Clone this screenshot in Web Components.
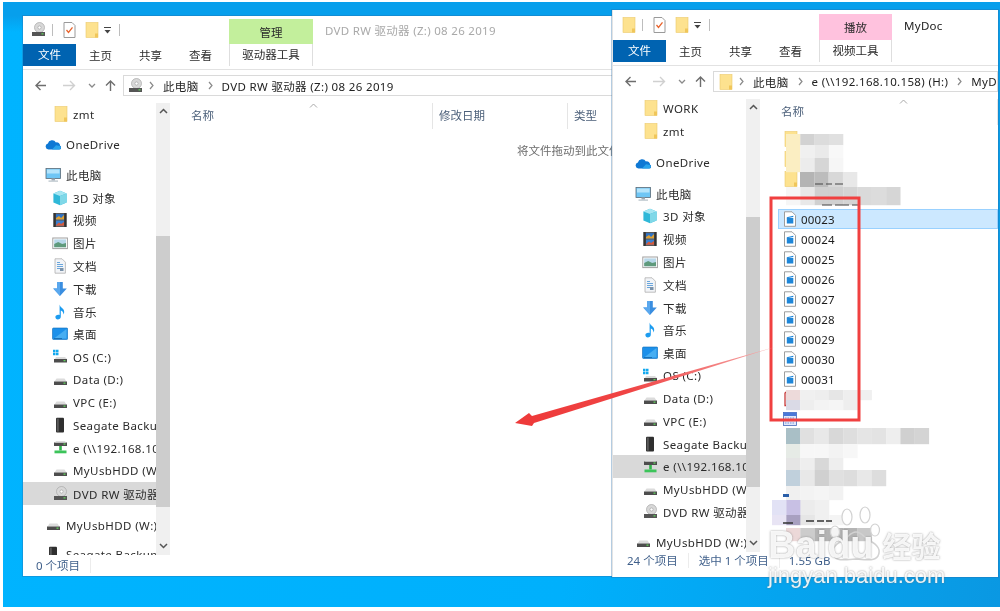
<!DOCTYPE html>
<html lang="zh">
<head>
<meta charset="utf-8">
<title>explorer</title>
<style>
html, body { margin: 0; padding: 0; background: #fff; }
body { font-family: "Noto Sans", "Noto Sans CJK SC", sans-serif; font-size: 11.5px; color: #2b2b2b; }
</style>
</head>
<body>
<x-desktop>
  <x-window style="left:23px;top:16px;width:640px;height:560px;--title-h:28px;--title-color:#a9a9a9;--ctx-bg:#c3ef9c;--ctx-w:84px;--ctx-h:25px;--status-h:21px;--status-top:3px;--status-left:13px">
    <x-icon slot="qat" name="dvd"></x-icon>
    <span slot="title">DVD RW 驱动器 (Z:) 08 26 2019</span>
    <span slot="ctx">管理</span>
    <span slot="tool">驱动器工具</span>
    <x-address slot="address" icon="dvd">
      <x-crumb>此电脑</x-crumb>
      <x-crumb>DVD RW 驱动器 (Z:) 08 26 2019</x-crumb>
    </x-address>
    <x-nav slot="nav" thumb-top="133" thumb-h="271">
      <x-nav-item icon="folder">zmt</x-nav-item>
      <x-nav-item icon="onedrive" level="0" gap="7">OneDrive</x-nav-item>
      <x-nav-item icon="pc" level="0" gap="8">此电脑</x-nav-item>
      <x-nav-item icon="cube">3D 对象</x-nav-item>
      <x-nav-item icon="video">视频</x-nav-item>
      <x-nav-item icon="picture">图片</x-nav-item>
      <x-nav-item icon="docs">文档</x-nav-item>
      <x-nav-item icon="download">下载</x-nav-item>
      <x-nav-item icon="music">音乐</x-nav-item>
      <x-nav-item icon="desktop">桌面</x-nav-item>
      <x-nav-item icon="os">OS (C:)</x-nav-item>
      <x-nav-item icon="drive">Data (D:)</x-nav-item>
      <x-nav-item icon="drive">VPC (E:)</x-nav-item>
      <x-nav-item icon="seagate">Seagate Backup Plus</x-nav-item>
      <x-nav-item icon="net">e (\\192.168.10.158) (H:)</x-nav-item>
      <x-nav-item icon="drive">MyUsbHDD (W:)</x-nav-item>
      <x-nav-item icon="dvd" selected>DVD RW 驱动器 (Z:)</x-nav-item>
      <x-nav-item icon="drive" level="0" gap="9">MyUsbHDD (W:)</x-nav-item>
      <x-nav-item icon="seagate" level="0" gap="6">Seagate Backup</x-nav-item>
    </x-nav>
    <x-columns slot="content" caret="137">
      <span style="width:261px;padding-left:19px">名称</span>
      <span style="width:135px">修改日期</span>
      <span style="width:80px">类型</span>
    </x-columns>
    <x-empty slot="content">将文件拖动到此文件夹</x-empty>
    <span slot="status">0 个项目</span>
  </x-window>

  <x-window style="left:612px;top:10px;width:386px;height:567px;border-left:1px solid #e4e4e4;box-sizing:border-box;--title-h:30px;--title-color:#222;--ctx-bg:#ffc2de;--ctx-w:73px;--ctx-h:26px;--status-h:25px;--status-top:1px;--status-left:14px">
    <x-icon slot="qat" name="folder"></x-icon>
    <span slot="title">MyDoc</span>
    <span slot="ctx">播放</span>
    <span slot="tool">视频工具</span>
    <x-address slot="address" icon="folder">
      <x-crumb>此电脑</x-crumb>
      <x-crumb>e (\\192.168.10.158) (H:)</x-crumb>
      <x-crumb>MyDoc</x-crumb>
    </x-address>
    <x-nav slot="nav" thumb-top="118" thumb-h="270">
      <x-nav-item icon="folder" gap="-2">WORK</x-nav-item>
      <x-nav-item icon="folder">zmt</x-nav-item>
      <x-nav-item icon="onedrive" level="0" gap="9">OneDrive</x-nav-item>
      <x-nav-item icon="pc" level="0" gap="8">此电脑</x-nav-item>
      <x-nav-item icon="cube">3D 对象</x-nav-item>
      <x-nav-item icon="video">视频</x-nav-item>
      <x-nav-item icon="picture">图片</x-nav-item>
      <x-nav-item icon="docs">文档</x-nav-item>
      <x-nav-item icon="download">下载</x-nav-item>
      <x-nav-item icon="music">音乐</x-nav-item>
      <x-nav-item icon="desktop">桌面</x-nav-item>
      <x-nav-item icon="os">OS (C:)</x-nav-item>
      <x-nav-item icon="drive">Data (D:)</x-nav-item>
      <x-nav-item icon="drive">VPC (E:)</x-nav-item>
      <x-nav-item icon="seagate">Seagate Backup Plus</x-nav-item>
      <x-nav-item icon="net" selected>e (\\192.168.10.158) (H:)</x-nav-item>
      <x-nav-item icon="drive">MyUsbHDD (W:)</x-nav-item>
      <x-nav-item icon="dvd">DVD RW 驱动器 (Z:)</x-nav-item>
      <x-nav-item icon="drive" level="0" gap="7">MyUsbHDD (W:)</x-nav-item>
    </x-nav>
    <x-columns slot="content" caret="137">
      <span style="width:261px;padding-left:19px">名称</span>
    </x-columns>
    <x-file-list slot="content">
      <x-file-row icon="folder"></x-file-row>
      <x-file-row icon="folder"></x-file-row>
      <x-file-row icon="folder"></x-file-row>
      <x-file-row></x-file-row>
      <x-file-row icon="file" selected>00023</x-file-row>
      <x-file-row icon="file">00024</x-file-row>
      <x-file-row icon="file">00025</x-file-row>
      <x-file-row icon="file">00026</x-file-row>
      <x-file-row icon="file">00027</x-file-row>
      <x-file-row icon="file">00028</x-file-row>
      <x-file-row icon="file">00029</x-file-row>
      <x-file-row icon="file">00030</x-file-row>
      <x-file-row icon="file">00031</x-file-row>
      <x-file-row icon="pdf"></x-file-row>
      <x-file-row icon="calendar"></x-file-row>
    </x-file-list>
    <span slot="status">24 个项目</span>
    <span slot="status" style="padding-left:10px">选中 1 个项目</span>
    <span slot="status" style="padding-left:9px;border:0">1.55 GB</span>
  </x-window>

  <x-mosaic></x-mosaic>
  <x-markup></x-markup>
  <x-watermark></x-watermark>
</x-desktop>

<script>
const ICONS = {
  folder: '<rect x="3" y=".5" width="12" height="15" fill="#fde28f" stroke="#ecca6c" stroke-width=".6"/><rect x="12" y="11.500" width="3" height="4" fill="#f0c65a"/>',
  doccheck: '<path d="M3 .5h8l3 3v12H3z" fill="#fff" stroke="#9a9a9a"/><path d="M5.500 8l2 2.400 4-5" fill="none" stroke="#e8622a" stroke-width="1.300"/>',
  drive: '<path d="M2.500 9.500L4.500 6.500h8l2 3z" fill="#dcdcdc"/><rect x="2" y="9.500" width="13" height="3.500" fill="#4d4d4d"/><rect x="11.500" y="10.500" width="2" height="1.300" fill="#5fd05a"/>',
  dvd: '<circle cx="9.500" cy="5.500" r="5" fill="#d8d8d8" stroke="#a8a8a8" stroke-width=".7"/><circle cx="9.500" cy="5.500" r="1.600" fill="#fff" stroke="#9a9a9a" stroke-width=".6"/><rect x="2" y="10" width="13" height="4" fill="#555"/><rect x="11.500" y="11.200" width="2" height="1.300" fill="#5fd05a"/>',
  onedrive: '<path d="M3.500 13.500a3 3 0 0 1-.6-5.900 4.300 4.300 0 0 1 8-1.200 3.400 3.400 0 0 1 4.200 3.300 2 2 0 0 1-.4 3.800z" fill="#0f78d4"/><path d="M7 13.500l4-4.200 4 .6a2 2 0 0 1-1 3.600z" fill="#2aa4ec"/>',
  pc: '<rect x="1" y="1.500" width="14.500" height="10" fill="#6fc6f5" stroke="#5a6a78" stroke-width=".8"/><rect x="2" y="2.500" width="12.500" height="4" fill="#b5e4fb"/><rect x="6.500" y="11.500" width="3.500" height="2" fill="#9aa8b2"/><rect x="3.500" y="13.500" width="9.500" height="1.200" fill="#b6c0c8"/>',
  cube: '<path d="M8 .8l6.600 2.600v9L8 15.200 1.400 12.400v-9z" fill="#2fb8d8"/><path d="M8 .8l6.600 2.600L8 6 1.400 3.400z" fill="#a6e6f2"/><path d="M8 6l6.600-2.600v9L8 15.200z" fill="#7fd8e8"/>',
  video: '<rect x="1.500" y="1" width="13" height="14" fill="#5a5a5a"/><rect x="1.500" y="1" width="2.200" height="14" fill="#333"/><rect x="12.300" y="1" width="2.200" height="14" fill="#333"/><rect x="4" y="2.200" width="8" height="5.400" fill="#2e74c8"/><rect x="4" y="8.600" width="8" height="5.200" fill="#3a80d0"/><path d="M4 6l3-2 2 2 3-3v4.600H4z" fill="#e0a030"/><path d="M4 13l3-2.600 2 1.600 3-2v3.800H4z" fill="#d85a3a"/>',
  picture: '<rect x=".8" y="3" width="14.600" height="10.600" fill="#fff" stroke="#a0a0a0"/><rect x="2.200" y="4.400" width="11.800" height="7.800" fill="#b8d8ea"/><path d="M2.200 9l4-2 4 2 3.800-1v4.200H2.200z" fill="#5f9a7c"/>',
  docs: '<path d="M3 .8h7l3.400 3.400v11H3z" fill="#f2f4f7" stroke="#b0b0b0" stroke-width=".8"/><path d="M5 4.500h3M5 6.500h6M5 8.500h6M5 10.500h6" stroke="#6aa6dc"/><rect x="8" y="10" width="3.500" height="3" fill="#7a92aa"/>',
  download: '<path d="M5.200 1h5.600v6.400h4L8 15 1.200 7.400h4z" fill="#3a8ee0"/><path d="M5.200 1h2.800v14L1.200 7.400h4z" fill="#5aa8ee"/>',
  music: '<path d="M7.600 .6c.4 3 4.600 3.600 4.600 7.400 0 1-.3 1.800-.8 2.400.2-2.400-1.200-3.400-2.600-4v6.400c0 1.800-1.600 2.800-3 2.800s-2.400-1.300-2.400-2.600c0-1.500 1.700-2.700 4.200-2z" fill="#1c9cf0"/>',
  desktop: '<rect x=".5" y="2" width="15.200" height="11.500" rx="1" fill="#1c90ea" stroke="#0f6cb8" stroke-width=".6"/><path d="M2 12.500L14.500 3v9.500z" fill="#48aef2"/><rect x="2" y="12.200" width="8" height=".7" fill="#0f5e9e"/>',
  os: '<path d="M1 .8h2.500v2.500H1zM4 .8h2.500v2.500H4zM1 3.800h2.500v2.500H1zM4 3.800h2.500v2.500H4z" fill="#12a8ee"/><path d="M3 10l1-2h9l2 2z" fill="#dcdcdc"/><rect x="2" y="10" width="13" height="3.500" fill="#4d4d4d"/><rect x="11.500" y="11" width="2" height="1.300" fill="#5fd05a"/>',
  seagate: '<rect x="4" y=".8" width="8" height="14.600" rx="1" fill="#2f2f2f"/><rect x="4.800" y="1.600" width="2" height="13" fill="#5a5a5a"/>',
  net: '<rect x="2" y="2.500" width="13" height="3.500" fill="#4d4d4d"/><path d="M3 2.500l1-1.500h9l1 1.500z" fill="#dcdcdc"/><rect x="11.500" y="3.400" width="2" height="1.300" fill="#5fd05a"/><rect x="7.200" y="6" width="2.600" height="4.500" fill="#2fb54a"/><rect x="2.500" y="10.500" width="12" height="2.800" fill="#3cc45a"/>',
  file: '<path d="M2.500 .8h7.500l3.500 3.500v11h-11z" fill="#fff" stroke="#9d9d9d"/><rect x="4.800" y="7" width="6.500" height="5.500" fill="#1f86d8"/><path d="M4.800 6.200l6.500-1.500v1.300l-6.500 1.200z" fill="#1f86d8"/>',
  pdf: '<path d="M3 1.500h7M3 1.500v13h7" fill="none" stroke="#c83a3a" stroke-width="1.300"/>',
  calendar: '<rect x="1.500" y="1.500" width="13" height="13" fill="#dfe8fa" stroke="#4468b8" stroke-width=".8"/><rect x="1.500" y="1.500" width="13" height="3.500" fill="#4a78d8"/><path d="M3 7h10M3 9.500h10M3 12h10" stroke="#7a96d8" stroke-dasharray="1.500 1"/>'
};

const CHEVRON = '<svg width="7" height="9" viewBox="0 0 7 9"><path d="M2 1l3 3.500L2 8" fill="none" stroke="#8a8a8a" stroke-width="1.200"/></svg>';

class XDesktop extends HTMLElement {
  constructor() {
    super();
    this.attachShadow({ mode: 'open' }).innerHTML = `
      <style>
        :host { display: block; position: relative; width: 1000px; height: 611px; overflow: hidden; background: #fff; filter: blur(.4px); }
        .screen { box-sizing: border-box; width: 997px; height: 605px; margin: 2px 0 0 3px;
          background: linear-gradient(180deg, #079fec 0, #079fec 14px, transparent 30px), linear-gradient(100deg, #00b4ff 0, #00b0fc 60%, #0a98e2 100%); }
      </style>
      <div class="screen"></div>
      <slot></slot>`;
  }
}

class XWindow extends HTMLElement {
  constructor() {
    super();
    this.attachShadow({ mode: 'open' }).innerHTML = `
      <style>
        :host { position: absolute; display: flex; flex-direction: column; background: #fff; overflow: hidden; box-shadow: 0 0 0 1px rgba(40,110,170,.35); }
        .title { display: flex; align-items: flex-end; height: var(--title-h); flex: none; }
        .qat { width: 206px; flex: none; align-self: center; display: flex; align-items: center; padding-left: 7px; box-sizing: border-box; }
        .sep { width: 1px; height: 12px; background: #bdbdbd; }
        .ctx { width: var(--ctx-w); height: var(--ctx-h); background: var(--ctx-bg); display: flex; align-items: center; justify-content: center; flex: none; }
        .wtitle { margin-left: 12px; height: 100%; display: flex; align-items: center; color: var(--title-color); white-space: nowrap; letter-spacing: .3px; }
        .tabs { display: flex; height: 22px; flex: none; align-items: center; }
        .file { width: 53px; height: 22px; line-height: 22px; background: #0063b1; color: #fff; text-align: center; margin-right: 13px; }
        .tab { width: 50px; }
        .tool { margin-left: -10px; width: var(--ctx-w); box-sizing: border-box; height: 22px; line-height: 22px; text-align: center; border: 1px solid #dedede; border-width: 0 1px; }
        .rule { height: 4px; box-sizing: border-box; border-bottom: 1px solid #e2e2e2; flex: none; }
        .addr { display: flex; height: 21px; margin: 5px 0 7px; flex: none; }
        .btns { width: 100px; flex: none; }
        .body { flex: 1; display: flex; min-height: 0; }
        .main { flex: 1; min-width: 0; display: flex; flex-direction: column; margin-left: 2px; }
        .status { height: var(--status-h); flex: none; display: flex; padding: var(--status-top) 0 0 var(--status-left); box-sizing: border-box; color: #3f5f8a; white-space: nowrap; }
        ::slotted([slot=status]) { border-right: 1px solid #ececec; padding-right: 10px; line-height: 15px; height: 15px; }
      </style>
      <div class="title">
        <div class="qat">
          <slot name="qat"></slot>
          <span class="sep" style="margin-left:6px"></span>
          <x-icon name="doccheck" style="margin-left:8px"></x-icon>
          <x-icon name="folder" style="margin-left:6px"></x-icon>
          <svg style="margin-left:4px" width="9" height="9" viewBox="0 0 9 9"><path d="M1 1.500h7" stroke="#444"/><path d="M1.500 4h6L4.500 7.500z" fill="#444"/></svg>
          <span class="sep" style="margin-left:7px"></span>
        </div>
        <div class="ctx"><slot name="ctx"></slot></div>
        <div class="wtitle"><slot name="title"></slot></div>
      </div>
      <div class="tabs">
        <div class="file">文件</div>
        <div class="tab">主页</div><div class="tab">共享</div><div class="tab">查看</div>
        <div class="tool"><slot name="tool"></slot></div>
      </div>
      <div class="rule"></div>
      <div class="addr">
        <svg class="btns" width="100" height="21" viewBox="0 0 100 21">
          <path d="M23 10.500H13M17.500 6l-4.500 4.500 4.500 4.500" fill="none" stroke="#6e6e6e" stroke-width="1.400"/>
          <path d="M40 10.500h11M47 6l4.500 4.500L47 15" fill="none" stroke="#d0d0d0" stroke-width="1.400"/>
          <path d="M66 9l3 3 3-3" fill="none" stroke="#8a8a8a" stroke-width="1.300"/>
          <path d="M87.500 16V6M83 10.500L87.500 6l4.500 4.500" fill="none" stroke="#6e6e6e" stroke-width="1.400"/>
        </svg>
        <slot name="address"></slot>
      </div>
      <div class="body">
        <slot name="nav"></slot>
        <div class="main"><slot name="content"></slot></div>
      </div>
      <div class="status"><slot name="status"></slot></div>`;
  }
}

class XIcon extends HTMLElement {
  connectedCallback() {
    if (this.shadowRoot) return;
    this.attachShadow({ mode: 'open' }).innerHTML = `
      <style>:host { display: inline-flex; flex: none; } svg { display: block; }</style>
      <svg width="16" height="16" viewBox="0 0 16 16">${ICONS[this.getAttribute('name')] || ''}</svg>`;
  }
}

class XAddress extends HTMLElement {
  connectedCallback() {
    if (this.shadowRoot) return;
    this.attachShadow({ mode: 'open' }).innerHTML = `
      <style>
        :host { flex: 1; min-width: 0; display: flex; align-items: center; box-sizing: border-box; border: 1px solid #dadada; padding-left: 3px; overflow: hidden; white-space: nowrap; color: #222; letter-spacing: .35px; }
      </style>
      <x-icon name="${this.getAttribute('icon')}"></x-icon>
      <slot></slot>`;
  }
}

class XCrumb extends HTMLElement {
  constructor() {
    super();
    this.attachShadow({ mode: 'open' }).innerHTML = `
      <style>
        :host { display: inline-flex; align-items: center; flex: none; }
        svg { margin: 0 8px; }
        :host(:first-child) svg { margin-left: 5px; }
      </style>
      ${CHEVRON}<slot></slot>`;
  }
}

class XNav extends HTMLElement {
  connectedCallback() {
    if (this.shadowRoot) return;
    const top = this.getAttribute('thumb-top');
    const h = this.getAttribute('thumb-h');
    this.attachShadow({ mode: 'open' }).innerHTML = `
      <style>
        :host { display: flex; flex: none; width: 147px; height: 100%; }
        .list { width: 133px; flex: none; overflow: hidden; white-space: nowrap; }
        .bar { width: 14px; flex: none; background: #f0f0f0; display: flex; flex-direction: column; }
        .thumb { background: #cdcdcd; height: ${h}px; margin-top: ${top - 16}px; }
        .up { height: 16px; flex: none; display: flex; align-items: center; justify-content: center; }
        .down { margin-top: auto; height: 18px; display: flex; align-items: center; justify-content: center; }
      </style>
      <div class="list"><slot></slot></div>
      <div class="bar">
        <div class="up"><svg width="9" height="6" viewBox="0 0 9 6"><path d="M1 5l3.500-3.500L8 5" fill="none" stroke="#555" stroke-width="1.500"/></svg></div>
        <div class="thumb"></div>
        <div class="down"><svg width="9" height="6" viewBox="0 0 9 6"><path d="M1 1l3.500 3.500L8 1" fill="none" stroke="#555" stroke-width="1.500"/></svg></div>
      </div>`;
  }
}

class XNavItem extends HTMLElement {
  connectedCallback() {
    if (this.shadowRoot) return;
    if (this.hasAttribute('gap')) this.style.marginTop = this.getAttribute('gap') + 'px';
    this.attachShadow({ mode: 'open' }).innerHTML = `
      <style>
        :host { display: flex; align-items: center; height: 22.77px; padding-left: 29px; gap: 5px; letter-spacing: .4px; }
        :host([level="0"]) { padding-left: 22px; }
        :host([selected]) { background: #d9d9d9; }
      </style>
      <x-icon name="${this.getAttribute('icon')}"></x-icon>
      <slot></slot>`;
  }
}

class XColumns extends HTMLElement {
  connectedCallback() {
    if (this.shadowRoot) return;
    this.attachShadow({ mode: 'open' }).innerHTML = `
      <style>
        :host { display: flex; height: 26px; flex: none; align-items: center; position: relative; color: #4c607a; white-space: nowrap; }
        ::slotted(span) { box-sizing: border-box; height: 26px; line-height: 26px; border-right: 1px solid #e5e5e5; padding-left: 6px; }
        svg { position: absolute; left: ${this.getAttribute('caret')}px; top: 0; }
      </style>
      <slot></slot>
      <svg width="9" height="5" viewBox="0 0 9 5"><path d="M1 4.500L4.500 1 8 4.500" fill="none" stroke="#a8a8a8"/></svg>`;
  }
}

class XEmpty extends HTMLElement {
  constructor() {
    super();
    this.attachShadow({ mode: 'open' }).innerHTML = `
      <style>:host { display: block; margin: 14px 0 0 345px; color: #6d6d6d; white-space: nowrap; line-height: 16px; }</style>
      <slot></slot>`;
  }
}

class XFileList extends HTMLElement {
  constructor() {
    super();
    this.attachShadow({ mode: 'open' }).innerHTML = `
      <style>:host { display: block; margin: 4px 0 0 16px; }</style>
      <slot></slot>`;
  }
}

class XFileRow extends HTMLElement {
  connectedCallback() {
    if (this.shadowRoot) return;
    const icon = this.getAttribute('icon');
    this.attachShadow({ mode: 'open' }).innerHTML = `
      <style>
        :host { display: flex; align-items: center; box-sizing: border-box; height: 20px; padding-left: 4px; gap: 3px; letter-spacing: .2px; color: #1c1c1c; }
        :host([selected]) { background: #cce8ff; box-shadow: inset 0 0 0 1px #99d1ff; }
      </style>
      ${icon ? `<x-icon name="${icon}"></x-icon>` : ''}
      <slot></slot>`;
  }
}

class XMosaic extends HTMLElement {
  constructor() {
    super();
    // rows of blurred file names: y, height, first x, block colours
    const rows = [
      [134, 11, 786, ['#fbeec2', '#d2d2d2', '#dcdcdc', '#e0e0e0']],
      [145, 13, 786, ['#fbeec2', '#f0f0f0', '#eaeaea', '#f8f8f8']],
      [158, 14, 786, ['#fbeec2', '#ececec', '#d6d6d6', '#f6f6f6']],
      [172, 15, 800, ['#b4b4b4', '#bcbcbc', '#d8d8d8', '#e8e8e8']],
      [187, 18, 786, ['#f6f6f6', '#e8e8e8', '#d0d0d0', '#d0d0d0', '#d4d4d4', '#dadada', '#dcdcdc', '#d6d6d6']],
      [390, 10, 786, ['#eddada', '#f0f0f0', '#eeeeee', '#e6e6e6', '#eeeeee', '#f0f0f0']],
      [400, 10, 786, ['#dadae6', '#eeeeee', '#f3f3f3', '#f5f5f5', '#eeeeee']],
      [428, 16, 786, ['#a9bfc6', '#e0e0e0', '#e8e8e8', '#d8d8d8', '#dedede', '#e5e5e5', '#e3e3e3', '#eeeeee', '#d0d0d0', '#d4d4d4']],
      [444, 14, 786, ['#e6ebe6', '#f7f7f7', '#f7f7f7', '#f3f3f3', '#f7f7f7']],
      [458, 12, 786, ['#e5e5e5', '#eeeeee', '#d8d8d8', '#eeeeee']],
      [470, 16, 786, ['#c0d0dc', '#e8e8e8', '#d0d0d0', '#e0e0e0', '#dddddd', '#e8e8e8', '#dddddd']],
      [486, 14, 786, ['#f0f0f0', '#f3f3f3', '#f5f5f5', '#f2f2f2']],
      [500, 15, 772, ['#e2e2f5', '#c8c0e4', '#ececec', '#f0f0f0']],
      [515, 10, 772, ['#e8e4f4', '#a8a0c0', '#e6e6e6', '#f0f0f0', '#f4f4f4']],
      [528, 13, 786, ['#ecd8d8', '#cccccc', '#b4b4b4', '#b4b4b4', '#b4b4b4', '#c8c8c8']]
    ];
    let rects = '';
    for (const [y, h, x0, cols] of rows) {
      cols.forEach((c, i) => { rects += `<rect x="${x0 + i * 14.3}" y="${y}" width="14.400" height="${h + .2}" fill="${c}"/>`; });
    }
    this.attachShadow({ mode: 'open' }).innerHTML = `
      <style>:host { position: absolute; left: 0; top: 0; pointer-events: none; } svg { display: block; }</style>
      <svg width="1000" height="611" viewBox="0 0 1000 611">${rects}
        <path d="M815 184h8M826 184h6M835 184h8M822 205h10M835 205h14M852 205h8" stroke="#444"/>
        <path d="M806 521h8M817 521h7M826 521h6M783 523h10" stroke="#333" stroke-width="1.500"/>
        <path d="M783 494h6v3h-6z" fill="#2a5ea8"/>
      </svg>`;
  }
}

class XMarkup extends HTMLElement {
  constructor() {
    super();
    this.attachShadow({ mode: 'open' }).innerHTML = `
      <style>:host { position: absolute; left: 0; top: 0; pointer-events: none; } svg { display: block; }</style>
      <svg width="1000" height="611" viewBox="0 0 1000 611">
        <defs><linearGradient id="fade" x1="775" y1="347" x2="530" y2="420" gradientUnits="userSpaceOnUse">
          <stop offset="0" stop-color="#f6b0b0"/><stop offset=".35" stop-color="#f26a6a"/><stop offset=".6" stop-color="#f04444"/><stop offset="1" stop-color="#ee3a3a"/>
        </linearGradient></defs>
        <rect x="771" y="198" width="88" height="222" fill="none" stroke="#f04040" stroke-width="3"/>
        <path d="M775 347 L532 416 L529 413 L515 423 L532 426 L534 423 Z" fill="url(#fade)"/>
      </svg>`;
  }
}

class XWatermark extends HTMLElement {
  constructor() {
    super();
    this.attachShadow({ mode: 'open' }).innerHTML = `
      <style>
        :host { position: absolute; left: 768px; top: 505px; width: 200px; height: 90px; color: rgba(255,255,255,.9); pointer-events: none; text-shadow: 0 0 2px rgba(110,110,110,.75); }
        .line { display: flex; align-items: center; margin-top: 25px; height: 30px; position: relative; }
        .baidu { font: 700 38px/30px "Liberation Sans", sans-serif; }
        .jy { font: 700 29px/30px "Noto Sans CJK SC", sans-serif; margin-left: 9px; }
        .url { font: 400 22px/24px "Liberation Sans", sans-serif; margin-top: 4px; white-space: nowrap; }
        svg { position: absolute; left: 0; top: 0; }
      </style>
      <svg width="120" height="60" viewBox="0 0 120 60">
        <g fill="rgba(255,255,255,.85)" stroke="#d2d2d2" stroke-width="1.200">
          <ellipse cx="67" cy="27" rx="4.500" ry="6"/><ellipse cx="79" cy="12" rx="5" ry="8"/><ellipse cx="97" cy="10" rx="5" ry="8"/><ellipse cx="107" cy="25" rx="4.500" ry="6"/>
        </g>
        <path d="M88 27c-6 0-8 6-14 9-8 4-11 9-8 15 3 5 9 4 22 3 12 1 19 2 22-3 3-6 0-11-8-15-6-3-8-9-14-9z" fill="none" stroke="#d2d2d2" stroke-width="1.500"/>
      </svg>
      <div class="line"><span class="baidu">Baidu</span><span class="jy">经验</span></div>
      <div class="url">jingyan.baidu.com</div>`;
  }
}

customElements.define('x-icon', XIcon);
customElements.define('x-desktop', XDesktop);
customElements.define('x-window', XWindow);
customElements.define('x-address', XAddress);
customElements.define('x-crumb', XCrumb);
customElements.define('x-nav', XNav);
customElements.define('x-nav-item', XNavItem);
customElements.define('x-columns', XColumns);
customElements.define('x-empty', XEmpty);
customElements.define('x-file-list', XFileList);
customElements.define('x-file-row', XFileRow);
customElements.define('x-mosaic', XMosaic);
customElements.define('x-markup', XMarkup);
customElements.define('x-watermark', XWatermark);
</script>
</body>
</html>
